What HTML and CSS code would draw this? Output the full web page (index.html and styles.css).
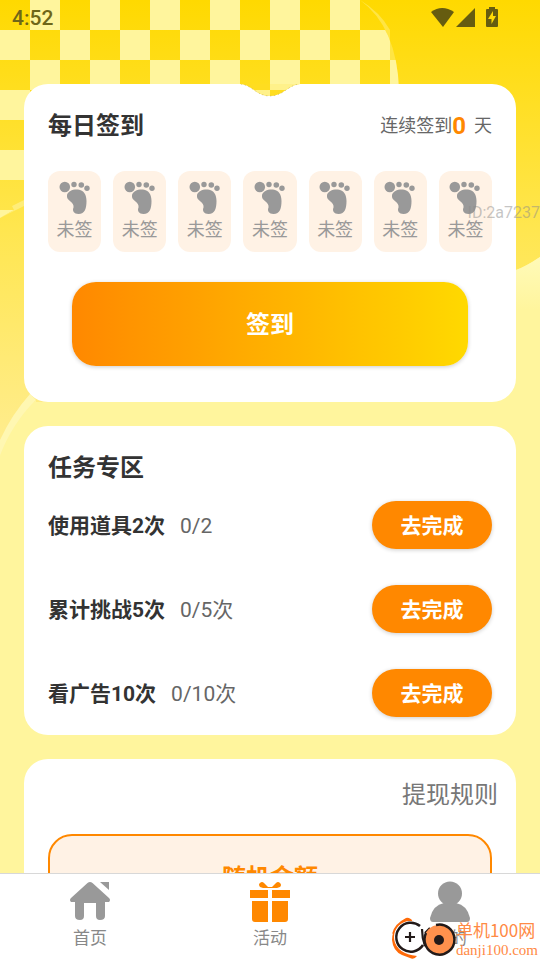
FILE: index.html
```html
<!DOCTYPE html>
<html lang="zh-CN">
<head>
<meta charset="utf-8">
<meta name="viewport" content="width=device-width, initial-scale=1">
<title>活动</title>
<link rel="stylesheet" href="styles.css">
</head>
<body>
<svg class="symbols" aria-hidden="true">
  <symbol id="foot" viewBox="0 0 32 34">
    <circle cx="5.8" cy="6" r="5.3"/><circle cx="15" cy="3.5" r="2.7"/><circle cx="22.3" cy="4" r="2.8"/><circle cx="28" cy="7.3" r="2.7"/>
    <path d="M8 14C9 10 14 8 19 8.500C25 9 27.500 14 27.500 20C27.500 27 26 33 19.500 33C15 33 13 30 14.500 26.500C15 24 13.500 22 11.500 20.500C9 18.500 7.500 17 8 14Z"/>
  </symbol>
</svg>
<div class="app">
  <svg class="backdrop" viewBox="0 0 540 960" preserveAspectRatio="xMidYMin slice" aria-hidden="true">
    <defs>
      <linearGradient id="sun" x1="0" y1="0" x2="0" y2="1"><stop offset="0" stop-color="#ffd900"/><stop offset=".5" stop-color="#ffe64f"/><stop offset="1" stop-color="#ffed91"/></linearGradient>
      <linearGradient id="fade" x1="0" y1="0" x2="0" y2="1"><stop offset="0" stop-color="#fffab8"/><stop offset="1" stop-color="#fff59d"/></linearGradient>
      <pattern id="checks" width="60" height="60" patternUnits="userSpaceOnUse"><path d="M30 0H60V30H30ZM0 30H30V60H0Z" fill="#fff59d"/></pattern>
      <clipPath id="disc"><path d="M0 0H360Q397 27 399 90V180H0Z"/></clipPath>
    </defs>
    <rect width="540" height="960" fill="#fff59d"/>
    <path d="M0 0H540V257Q525 267 516 270L400 402H33Q10 424 0 455Z" fill="url(#sun)"/>
    <path d="M540 257Q525 267 516 270V310H540Z" fill="url(#fade)"/>
    <path d="M360 0Q397 27 399 90H390V30Q380 12 360 0Z" fill="#ffe544"/>
    <rect width="400" height="180" fill="url(#checks)" clip-path="url(#disc)"/>
    <path d="M0 210H14L0 218Z" fill="#fff59d"/>
    <path d="M12 206L24 200V206L0 218L14 210Z" fill="#ffed79"/>
    <path d="M0 440Q12 414 30 394L36 400Q12 424 0 456Z" fill="#fff7b2"/>
    <path d="M0 456Q12 424 36 400V460H0Z" fill="#fff59d"/>
  </svg>

  <header class="status">
    <time>4:52</time>
    <svg class="status-icons" viewBox="0 0 70 22" aria-hidden="true">
      <path d="M0 5Q11-3 23 5L12 20Z"/><path d="M25 20L44 1V20Z"/>
      <path fill-rule="evenodd" d="M58 0H64V2H66Q67 2 67 3V19Q67 20 66 20H56Q55 20 55 19V3Q55 2 56 2H58ZM62 4L57 12H60.500V17L65 9H62Z"/>
    </svg>
  </header>

  <main class="content">
    <section class="card sign">
      <svg class="notch" viewBox="0 0 60 13" aria-hidden="true">
        <path d="M0 0H60Q54 0 46 6Q38 12 30 12Q22 12 14 6Q6 0 0 0Z" fill="#ffdd20"/>
        <path d="M30 0H60Q54 0 46 6H30ZM14 6H30V12Q22 12 14 6Z" fill="#fff18a"/>
        <path d="M1 0Q7 1 14 6Q22 12 30 12Q38 12 46 6Q53 1 59 0" fill="none" stroke="#bba866" stroke-width=".7" stroke-dasharray="1 3"/>
      </svg>
      <div class="card-head">
        <h2>每日签到</h2>
        <p class="streak">连续签到<b>0</b><span>天</span></p>
      </div>
      <ol class="days">
        <li><svg><use href="#foot"/></svg>未签</li>
        <li><svg><use href="#foot"/></svg>未签</li>
        <li><svg><use href="#foot"/></svg>未签</li>
        <li><svg><use href="#foot"/></svg>未签</li>
        <li><svg><use href="#foot"/></svg>未签</li>
        <li><svg><use href="#foot"/></svg>未签</li>
        <li><svg><use href="#foot"/></svg>未签</li>
      </ol>
      <button class="sign-button" type="button">签到</button>
    </section>

    <section class="card tasks">
      <h2>任务专区</h2>
      <ul>
        <li><strong>使用道具2次</strong><span>0/2</span><button type="button">去完成</button></li>
        <li><strong>累计挑战5次</strong><span>0/5次</span><button type="button">去完成</button></li>
        <li><strong>看广告10次</strong><span>0/10次</span><button type="button">去完成</button></li>
      </ul>
    </section>

    <section class="card withdraw">
      <a class="rules" href="#rules">提现规则</a>
      <div class="amount">随机金额</div>
    </section>
  </main>

  <nav class="tabs">
    <a href="#home">
      <svg viewBox="0 0 42 42" aria-hidden="true"><path d="M18.500 2Q21 0 23.500 2L40 17Q42 19 40 21H36V35Q36 39 31 39Q27 39 27 35V22H15V35Q15 39 11 39Q6 39 6 35V21H2Q0 19 2 17Z"/><path d="M31 1H40V9Z"/></svg>
      首页
    </a>
    <a class="active" href="#activity" aria-current="page">
      <svg viewBox="0 0 42 42" aria-hidden="true"><path d="M11 6Q9 3 11 2Q13 0 15 2L19 6H23L27 2Q29 0 31 2Q33 4 31 6L28 7H14ZM1 9H19V17H1ZM23 9H41V17H23ZM3 20H19V41H6Q3 41 3 38ZM23 20H39V38Q39 41 36 41H23Z"/></svg>
      活动
    </a>
    <a href="#me">
      <svg viewBox="0 0 42 42" aria-hidden="true"><circle cx="21" cy="12.500" r="12"/><path d="M15 22H27Q38 24 41 37Q41 41 38 41H4Q1 41 1 37Q4 24 15 22Z"/></svg>
      我的
    </a>
  </nav>

  <div class="user-id">ID:2a7237</div>
  <div class="site">
    <svg viewBox="0 0 66 44" aria-hidden="true">
      <path d="M22 3Q2 8 2 24Q3 35 12 39L20 42Q24 44 27 40Q7 38 5 24Q5 12 13 7L23 6Q20 1 16 2Q4 8 2 18" fill="#ff6a08"/>
      <circle cx="20" cy="21" r="16" fill="#fff"/>
      <path d="M30 10A14.500 14.500 0 1 0 33 29" fill="none" stroke="#231a19" stroke-width="2.500"/>
      <path d="M15 21H25M20 16V26M32 13Q32 22 35 30M35 17L40 12" fill="none" stroke="#231a19" stroke-width="2.200"/>
      <circle cx="49" cy="24" r="15" fill="#ff914d"/>
      <path d="M46 9A15 15 0 1 1 36 17" fill="none" stroke="#231a19" stroke-width="2.500"/>
      <circle cx="49" cy="24" r="5" fill="#231a19"/>
    </svg>
    <div class="site-text"><span>单机100网</span><span class="domain">danji100.com</span></div>
  </div>
</div>
</body>
</html>
```
FILE: styles.css
```css
* { box-sizing: border-box; }
body {
  margin: 0;
  font-family: Roboto, "Noto Sans CJK SC", sans-serif;
  color: #333;
}
h2, p, ol, ul { margin: 0; padding: 0; }
ol, ul { list-style: none; }
button { border: 0; font: inherit; font-weight: 700; color: #fff; cursor: pointer; }
a { color: inherit; text-decoration: none; }
.symbols { position: absolute; width: 0; height: 0; }

.app {
  position: relative;
  display: flex;
  flex-direction: column;
  height: 100vh;
  overflow: hidden;
  background: #fff59d;
}
.backdrop { position: absolute; inset: 0; width: 100%; height: 100%; }

.status {
  position: relative;
  display: flex;
  justify-content: space-between;
  align-items: center;
  height: 36px;
  flex: none;
  padding: 0 39px 0 12px;
  font-size: 21px;
  font-weight: 500;
  color: #6f6618;
}
.status-icons { width: 70px; height: 22px; fill: #665c10; }

.content {
  position: relative;
  flex: 1;
  min-height: 0;
  overflow: hidden;
  display: flex;
  flex-direction: column;
  gap: 24px;
  padding: 48px 24px 0;
}
.card { position: relative; flex: none; padding: 24px; border-radius: 24px; background: #fff; }
h2 { font-size: 24px; line-height: 36px; font-weight: 700; }

.sign { padding-bottom: 36px; }
.notch { position: absolute; top: 0; left: 50%; width: 60px; height: 13px; margin-left: -30px; }
.card-head { display: flex; justify-content: space-between; align-items: center; }
.streak { display: flex; align-items: center; font-size: 18px; line-height: 24px; color: #666; }
.streak b { font-size: 24px; font-weight: 700; color: #ff8800; }
.streak span { margin-left: 8px; }

.days { display: flex; gap: 12px; margin: 27px 0 30px; }
.days li {
  flex: 1;
  display: flex;
  flex-direction: column;
  align-items: center;
  height: 81px;
  padding-top: 10px;
  border-radius: 12px;
  background: #fff2e5;
  font-size: 18px;
  line-height: 30px;
  color: #999;
}
.days svg { width: 32px; height: 34px; fill: #999; }
.sign-button {
  display: block;
  width: calc(100% - 48px);
  height: 84px;
  margin: 0 auto;
  padding: 0 0 4px;
  border-radius: 24px;
  background: linear-gradient(90deg, #ff8800, #ffd900);
  box-shadow: 0 1px 4px rgba(0, 0, 0, .2);
  font-size: 24px;
}

.tasks { padding-bottom: 18px; }
.tasks ul { display: grid; gap: 36px; margin-top: 15px; }
.tasks li { display: flex; align-items: center; font-size: 21px; line-height: 30px; }
.tasks strong { font-weight: 700; }
.tasks span { margin-left: 15px; color: #666; }
.tasks button {
  width: 120px;
  height: 48px;
  margin-left: auto;
  padding: 2px 0 0;
  border-radius: 24px;
  background: #ff8800;
  box-shadow: 0 1px 4px rgba(0, 0, 0, .2);
}
.tasks strong, .tasks span { padding-top: 2px; }

.withdraw { padding-top: 18px; }
.rules { display: block; margin-right: -6px; font-size: 24px; line-height: 36px; text-align: right; color: #777; }
.amount {
  height: 120px;
  margin-top: 21px;
  padding-top: 24px;
  border: 2px solid #ff8800;
  border-radius: 24px;
  background: #fff2e5;
  font-size: 24px;
  line-height: 36px;
  font-weight: 700;
  text-align: center;
  color: #ff8800;
}

.tabs {
  position: relative;
  display: flex;
  flex: none;
  height: 87px;
  border-top: 1px solid #d8d8d8;
  background: #fff;
}
.tabs a {
  flex: 1;
  display: flex;
  flex-direction: column;
  align-items: center;
  padding-top: 7px;
  font-size: 17px;
  line-height: 28px;
  color: #888;
}
.tabs svg { width: 42px; height: 42px; flex: none; margin-bottom: 1px; fill: #999; }
.tabs .active svg { fill: #ff8800; }

.user-id { position: absolute; top: 203px; right: 0; font-size: 16px; line-height: 20px; color: rgba(140, 140, 140, .5); }
.site { position: absolute; right: 2px; bottom: 0; display: flex; align-items: flex-end; }
.site > svg { width: 66px; height: 44px; }
.site-text {
  display: flex;
  flex-direction: column;
  font-size: 17px;
  line-height: 20px;
  font-family: "Noto Sans CJK SC", sans-serif;
  color: #ff8a45;
}
.domain { font-family: "Liberation Serif", serif; font-size: 15px; }
```
